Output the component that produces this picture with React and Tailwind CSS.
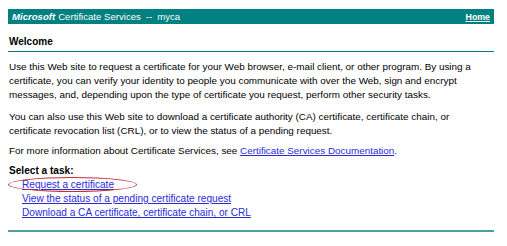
import React from 'react';

const LINKS = [
    'Request a certificate',
    'View the status of a pending certificate request',
    'Download a CA certificate, certificate chain, or CRL',
];

export default function App() {
    return (
        <div className="min-h-[246px] w-[507px] bg-white pl-2 pt-[9px] font-['Liberation_Sans',Arial,sans-serif] text-[9.9px] leading-[14px] text-black">
            <div className="w-[486px]">

                {/* ── Title bar ─────────────────────────────────────── */}
                <div className="flex h-[15px] items-center justify-between bg-[#008080] px-1 text-white">
                    <span className="flex items-center text-[9.6px]">
                        <b className="italic">Microsoft</b>
                        <span className="ml-[3px]">Certificate Services</span>
                        <span className="mx-[5px]">--</span>
                        <span>myca</span>
                    </span>
                    <a href="#" className="text-[8.8px] font-bold underline">Home</a>
                </div>

                {/* ── Heading ───────────────────────────────────────── */}
                <div className="mt-[11px] border-b border-[#008080] pb-[2px] pl-px text-[10px] font-bold">Welcome</div>

                {/* ── Body ──────────────────────────────────────────── */}
                <div className="mt-[8px] w-[470px] pl-px">
                    <p>
                        Use this Web site to request a certificate for your Web browser, e-mail client, or other program. By using a
                        certificate, you can verify your identity to people you communicate with over the Web, sign and encrypt
                        messages, and, depending upon the type of certificate you request, perform other security tasks.
                    </p>
                    <p className="mt-2">
                        You can also use this Web site to download a certificate authority (CA) certificate, certificate chain, or
                        certificate revocation list (CRL), or to view the status of a pending request.
                    </p>
                    <p className="mt-[6px]">
                        For more information about Certificate Services, see{' '}
                        <a href="#" className="text-[#2b2bd8] underline">Certificate Services Documentation</a>.
                    </p>
                </div>

                <div className="mt-[6px] pl-px text-[10.1px]">
                    <div className="font-bold">Select a task:</div>
                    <ul className="pl-[13px]">
                        {LINKS.map((label, i) => (
                            <li key={label} className="relative">
                                <a href="#" className="text-[#2b2bd8] underline">{label}</a>
                                {i === 0 && (
                                    <span className="pointer-events-none absolute left-[-14px] top-[-1px] h-[15px] w-[129px] rounded-[50%] border-[1.5px] border-[#c0303c]" />
                                )}
                            </li>
                        ))}
                    </ul>
                </div>

                {/* ── Footer rule ───────────────────────────────────── */}
                <div className="mt-[10px] h-[2px] bg-[#4e9c9c]" />
            </div>
        </div>
    );
}
